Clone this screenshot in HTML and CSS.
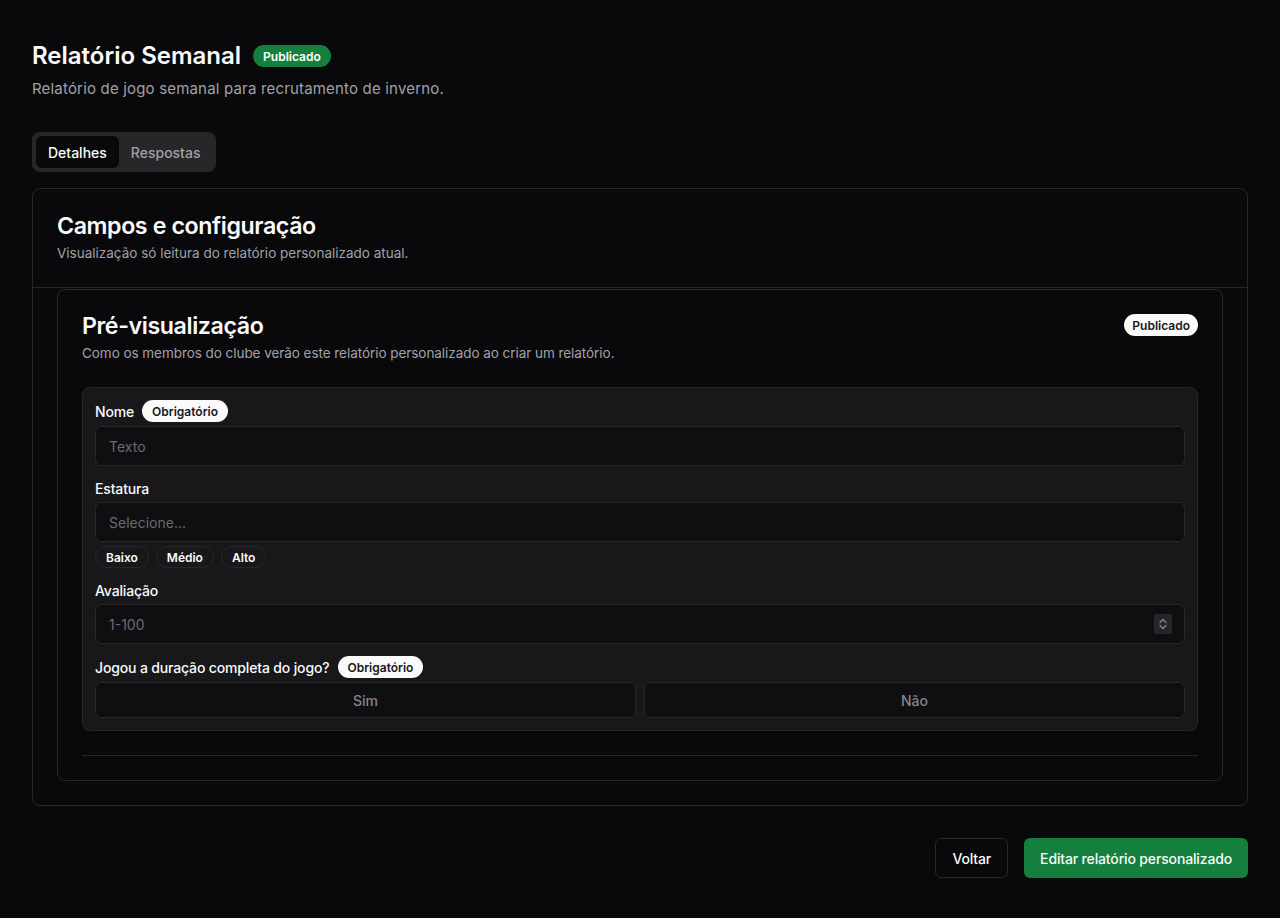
FILE: index.html
```html
<!DOCTYPE html>
<html lang="pt">

<head>
    <meta charset="UTF-8">
    <meta name="viewport" content="width=device-width, initial-scale=1.0">
    <title>Relatório Semanal</title>
    <link rel="stylesheet" href="styles.css">
</head>

<body>
    <div class="page">
        <header class="page-header">
            <div class="title-row">
                <h1>Relatório Semanal</h1>
                <span class="badge badge-green">Publicado</span>
            </div>
            <p class="page-desc">Relatório de jogo semanal para recrutamento de inverno.</p>
        </header>

        <div class="tabs">
            <button class="tab active">Detalhes</button>
            <button class="tab">Respostas</button>
        </div>

        <section class="card">
            <div class="card-header">
                <h2>Campos e configuração</h2>
                <p class="muted">Visualização só leitura do relatório personalizado atual.</p>
            </div>

            <div class="card-body">
                <div class="preview">
                    <div class="preview-head">
                        <div>
                            <h2>Pré-visualização</h2>
                            <p class="muted">Como os membros do clube verão este relatório personalizado ao criar um relatório.</p>
                        </div>
                        <span class="badge badge-light">Publicado</span>
                    </div>

                    <div class="form-box">
                        <div class="field">
                            <div class="label-row">
                                <span class="label">Nome</span>
                                <span class="badge badge-light">Obrigatório</span>
                            </div>
                            <div class="input"><span class="placeholder">Texto</span></div>
                        </div>

                        <div class="field">
                            <div class="label-row plain">
                                <span class="label">Estatura</span>
                            </div>
                            <div class="input"><span class="placeholder">Selecione...</span></div>
                            <div class="chips">
                                <span class="chip">Baixo</span>
                                <span class="chip">Médio</span>
                                <span class="chip">Alto</span>
                            </div>
                        </div>

                        <div class="field">
                            <div class="label-row plain">
                                <span class="label">Avaliação</span>
                            </div>
                            <div class="input">
                                <span class="placeholder">1-100</span>
                                <span class="spinner">
                                    <svg width="10" height="14" viewBox="0 0 10 14" fill="none" stroke="#8a8a90" stroke-width="1.2" stroke-linecap="round" stroke-linejoin="round">
                                        <path d="M2 5.5 L5 2.5 L8 5.5" />
                                        <path d="M2 8.5 L5 11.5 L8 8.5" />
                                    </svg>
                                </span>
                            </div>
                        </div>

                        <div class="field">
                            <div class="label-row">
                                <span class="label">Jogou a duração completa do jogo?</span>
                                <span class="badge badge-light">Obrigatório</span>
                            </div>
                            <div class="choice-grid">
                                <button class="choice">Sim</button>
                                <button class="choice">Não</button>
                            </div>
                        </div>
                    </div>

                    <hr class="divider">
                </div>
            </div>
        </section>

        <footer class="actions">
            <button class="btn btn-outline">Voltar</button>
            <button class="btn btn-green">Editar relatório personalizado</button>
        </footer>
    </div>
</body>

</html>
```

FILE: styles.css
```css
:root {
    --bg: #09090b;
    --panel: #18181b;
    --field: #0f0f11;
    --border: #27272a;
    --text: #fafafa;
    --text-dim: #a1a1aa;
    --text-faint: #6b6b73;
    --green: #15803d;
}

* {
    box-sizing: border-box;
    margin: 0;
    padding: 0;
}

html,
body {
    background: var(--bg);
    color: var(--text);
}

body {
    font-family: Inter, "Noto Sans", sans-serif;
    font-size: 14px;
}

.page {
    padding: 42px 32px 40px;
}

.title-row {
    display: flex;
    align-items: center;
    gap: 12px;
}

h1 {
    font-size: 24px;
    line-height: 28px;
    font-weight: 600;
    letter-spacing: 0;
}

h2 {
    font-size: 23.2px;
    line-height: 32px;
    font-weight: 600;
    letter-spacing: -0.4px;
}

.page-desc {
    margin-top: 9px;
    font-size: 15px;
    line-height: 20px;
    letter-spacing: 0.18px;
    color: var(--text-dim);
}

.muted {
    font-size: 13.5px;
    line-height: 20px;
    color: var(--text-dim);
    margin-top: 1px;
}

.preview-head .muted {
    letter-spacing: -0.05px;
}

.badge {
    display: inline-flex;
    align-items: center;
    height: 22px;
    padding: 0 10px;
    border-radius: 999px;
    font-size: 12px;
    font-weight: 600;
    white-space: nowrap;
}

.badge-green {
    background: var(--green);
    color: #fff;
}

.badge-light {
    background: var(--text);
    color: #18181b;
}

.tabs {
    display: inline-flex;
    margin-top: 33px;
    padding: 4px;
    background: var(--border);
    border-radius: 8px;
}

.tab {
    height: 32px;
    padding: 0 12px;
    border: none;
    border-radius: 6px;
    background: transparent;
    color: var(--text-dim);
    font-family: inherit;
    font-size: 14px;
    font-weight: 500;
}

.tab.active {
    background: var(--bg);
    color: var(--text);
}

.card {
    margin-top: 16px;
    border: 1px solid var(--border);
    border-radius: 8px;
}

.card-header {
    padding: 21px 24px 24px;
    border-bottom: 1px solid var(--border);
}

.card-body {
    padding: 1px 24px 24px;
}

.preview {
    border: 1px solid var(--border);
    border-radius: 8px;
    padding: 20px 24px 24px;
}

.preview-head {
    display: flex;
    justify-content: space-between;
    align-items: flex-start;
}

.preview-head .badge {
    margin-top: 4px;
    padding: 0 8px;
}

.form-box {
    margin-top: 24px;
    background: var(--panel);
    border: 1px solid var(--border);
    border-radius: 8px;
    padding: 12px;
    display: flex;
    flex-direction: column;
    gap: 12px;
}

.field {
    display: flex;
    flex-direction: column;
    gap: 4px;
}

.label-row {
    display: flex;
    align-items: center;
    gap: 8px;
    height: 22px;
}

.label-row.plain {
    height: 20px;
}

.label {
    font-size: 14px;
    font-weight: 500;
    letter-spacing: -0.15px;
}

.input {
    height: 40px;
    display: flex;
    align-items: center;
    justify-content: space-between;
    padding: 0 12px 0 13px;
    background: var(--field);
    border: 1px solid var(--border);
    border-radius: 6px;
}

.placeholder {
    color: var(--text-faint);
    font-size: 14px;
}

.spinner {
    display: flex;
    align-items: center;
    justify-content: center;
    width: 18px;
    height: 20px;
    background: #26262a;
    border-radius: 2px;
}

.chips {
    display: flex;
    gap: 7px;
}

.chip {
    display: inline-flex;
    align-items: center;
    height: 22px;
    padding: 0 10px;
    border: 1px solid var(--border);
    border-radius: 999px;
    font-size: 12px;
    font-weight: 600;
}

.choice-grid {
    display: grid;
    grid-template-columns: 1fr 1fr;
    gap: 8px;
}

.choice {
    height: 36px;
    background: var(--field);
    border: 1px solid var(--border);
    border-radius: 6px;
    color: #85858c;
    font-family: inherit;
    font-size: 14px;
    font-weight: 500;
}

.divider {
    margin-top: 24px;
    border: none;
    border-top: 1px solid var(--border);
}

.actions {
    display: flex;
    justify-content: flex-end;
    gap: 16px;
    margin-top: 32px;
}

.btn {
    height: 40px;
    padding: 0 16px;
    border-radius: 6px;
    font-family: inherit;
    font-size: 14px;
    font-weight: 500;
    letter-spacing: -0.15px;
    color: var(--text);
}

.btn-outline {
    background: var(--bg);
    border: 1px solid var(--border);
}

.btn-green {
    background: var(--green);
    border: none;
}
```
